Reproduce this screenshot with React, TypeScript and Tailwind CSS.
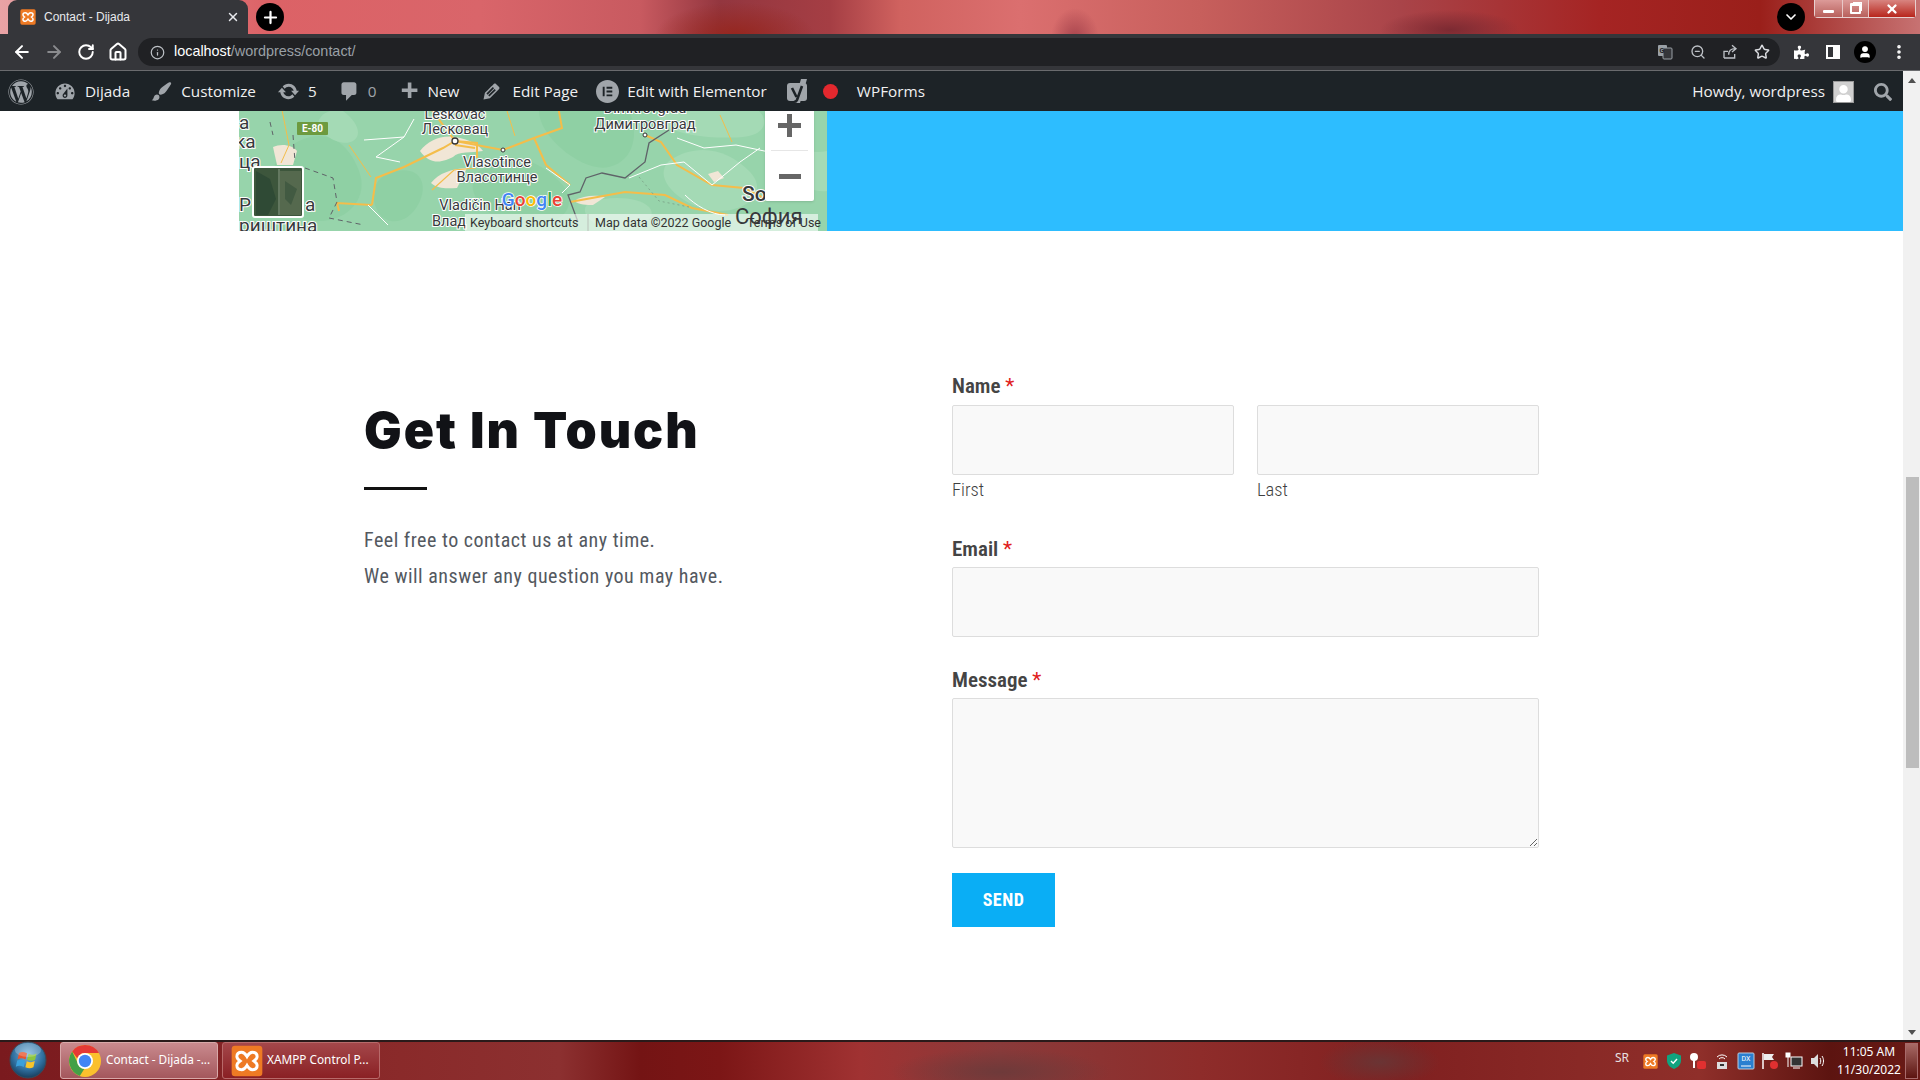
import {
  ArrowLeft,
  ArrowRight,
  ChevronDown,
  Home,
  Info,
  MoreVertical,
  Plus,
  RotateCw,
  Star,
  User,
  X,
  ZoomOut,
} from "lucide-react";
import { FaPuzzlePiece, FaSearch, FaUser, FaWordpress } from "react-icons/fa";
import { SiElementor } from "react-icons/si";

// admin bar icons (dashicons shapes)
const DASH = {
  gauge:
    "M3.76 16h12.48c1.1-1.37 1.76-3.11 1.76-5 0-4.42-3.58-8-8-8s-8 3.58-8 8c0 1.89.66 3.63 1.76 5zM10 4c.55 0 1 .45 1 1s-.45 1-1 1-1-.45-1-1 .45-1 1-1zM6 6c.55 0 1 .45 1 1s-.45 1-1 1-1-.45-1-1 .45-1 1-1zm8 0c.55 0 1 .45 1 1s-.45 1-1 1-1-.45-1-1 .45-1 1-1zm-5.37 5.55L12 7v6c0 1.1-.9 2-2 2s-2-.9-2-2c0-.57.24-1.08.63-1.45zM4 10c.55 0 1 .45 1 1s-.45 1-1 1-1-.45-1-1 .45-1 1-1zm12 0c.55 0 1 .45 1 1s-.45 1-1 1-1-.45-1-1 .45-1 1-1zm-5 3c0-.55-.45-1-1-1s-1 .45-1 1 .45 1 1 1 1-.45 1-1z",
  brush:
    "M18.33 3.57s.27-.8-.31-1.36c-.53-.52-1.22-.24-1.22-.24-.61.3-5.76 3.47-7.67 5.57-.86.96-2.06 3.79-1.09 4.82.92.98 3.96-.17 4.79-1 2.06-2.06 5.21-7.17 5.5-7.79zM1.4 17.65c2.37-1.56 1.46-3.41 3.23-4.64.93-.65 2.22-.62 3.08.29.63.67.8 2.57-.16 3.46-1.57 1.45-4 1.55-6.15.89z",
  update:
    "M10.2 3.28c3.53 0 6.43 2.61 6.92 6h2.08l-3.5 4-3.5-4h2.32c-.45-1.97-2.21-3.45-4.32-3.45-1.45 0-2.73.71-3.54 1.78L4.95 5.66C6.23 4.2 8.11 3.28 10.2 3.28zm-.4 13.44c-3.52 0-6.43-2.61-6.92-6H.8l3.5-4c1.17 1.33 2.33 2.67 3.5 4H5.48c.45 1.97 2.21 3.45 4.32 3.45 1.45 0 2.73-.71 3.54-1.78l1.71 1.95c-1.28 1.46-3.15 2.38-5.25 2.38z",
  comment: "M5 2h9c1.1 0 2 .9 2 2v7c0 1.1-.9 2-2 2h-2l-5 5v-5H5c-1.1 0-2-.9-2-2V4c0-1.1.9-2 2-2z",
  plus: "M17 7v3h-5v5H9v-5H4V7h5V2h3v5h5z",
  edit:
    "M13.89 3.39l2.71 2.72c.46.46.42 1.24.03 1.64l-8.01 8.02-5.56 1.16 1.16-5.58s7.6-7.63 7.99-8.03c.39-.39 1.22-.39 1.68.07zm-2.73 2.79l-5.59 5.61 1.11 1.11 5.54-5.65zm-2.97 8.23l5.58-5.6-1.07-1.08-5.59 5.6z",
};

function DashIcon({ d, size }: { d: string; size: number }) {
  return (
    <svg width={size} height={size} viewBox="0 0 20 20" fill="#a0a5aa" fillRule="evenodd">
      <path d={d} />
    </svg>
  );
}

function YoastIcon() {
  return (
    <svg width="22" height="26" viewBox="0 0 22 26">
      <rect x="0" y="4" width="20" height="18" rx="3" fill="#a0a5aa" />
      <path d="M14 0h6l-7 24H7z" fill="#a0a5aa" />
      <path d="M5 9l4.500 9M15 7l-5 14c-.5 1.300-1.500 1.800-3 2" fill="none" stroke="#1d2327" strokeWidth="2.600" />
    </svg>
  );
}

function XamppIcon({ size, className }: { size: number; className?: string }) {
  return (
    <svg width={size} height={size} viewBox="0 0 24 24" className={className}>
      <rect x="0.5" y="0.5" width="23" height="23" rx="2.5" fill="#ee7a24" />
      <path
        d="M8 5.5c-2.6 0-3.6 1.6-3.6 3.1 0 1.4 1 2.4 2.4 3.4-1.4 1-2.4 2-2.4 3.4 0 1.5 1 3.1 3.6 3.1 2 0 3-1.5 4-3.2 1 1.7 2 3.2 4 3.2 2.6 0 3.6-1.6 3.6-3.1 0-1.4-1-2.4-2.4-3.4 1.4-1 2.4-2 2.4-3.4 0-1.5-1-3.1-3.6-3.1-2 0-3 1.5-4 3.2-1-1.7-2-3.2-4-3.2z"
        fill="none"
        stroke="#fff"
        strokeWidth="2.2"
      />
    </svg>
  );
}

function ChromeIcon() {
  return (
    <svg width="32" height="32" viewBox="0 0 32 32">
      <circle cx="16" cy="16" r="16" fill="#fbc02d" />
      <path d="M16 0a16 16 0 0 1 13.9 8H16a8 8 0 0 0-7.6 5.5L3.2 6.4A16 16 0 0 1 16 0z" fill="#e53935" />
      <path d="M3.2 6.4l6.4 13.6a8 8 0 0 0 5.6 4L10.8 31A16 16 0 0 1 3.2 6.4z" fill="#43a047" />
      <circle cx="16" cy="16" r="8" fill="#fff" />
      <circle cx="16" cy="16" r="6.2" fill="#4285f4" />
    </svg>
  );
}

function StartOrb() {
  return (
    <svg width="38" height="38" viewBox="0 0 38 38">
      <defs>
        <radialGradient id="orb" cx="50%" cy="35%" r="70%">
          <stop offset="0%" stopColor="#7fb7df" />
          <stop offset="60%" stopColor="#2f6f9f" />
          <stop offset="100%" stopColor="#12334f" />
        </radialGradient>
      </defs>
      <circle cx="19" cy="19" r="18" fill="url(#orb)" stroke="#3a4a5a" />
      <path d="M10 12c3-1.500 5-1 8 .2l-1.400 6.200c-3-1.200-5-1.500-8-.2z" fill="#e8552d" />
      <path d="M19.500 12.800c3 1.200 5 1.400 8-.2l-1.400 6.200c-3 1.400-5 1.200-8 0z" fill="#8cc63f" />
      <path d="M8.200 19.500c3-1.300 5-1 8 .2l-1.400 6.200c-3-1.200-5-1.500-8-.2z" fill="#3aa0dc" />
      <path d="M17.800 20.200c3 1.200 5 1.400 8-.2l-1.400 6.200c-3 1.400-5 1.200-8 0z" fill="#f7c52b" />
      <ellipse cx="19" cy="9" rx="13" ry="7" fill="#fff" opacity="0.22" />
    </svg>
  );
}

function MapCanvas() {
  return (
    <svg width="588" height="120" viewBox="0 0 588 120" className="block">
      <rect width="588" height="120" fill="#97d4ab" />
      {/* terrain patches */}
      <g fill="#8fd0a4">
        <path d="M60 30c30-14 50 4 60 30s-10 50-40 50-40-20-44-40 4-30 24-40z" />
        <path d="M240 60c30-24 60-10 80 10s10 44-30 44-70-34-50-54z" />
        <path d="M300 0h90c10 20 6 50-20 56s-70-30-70-56z" />
        <path d="M150 62c30-10 40 10 30 30s-30 24-40 10-6-34 10-40z" />
      </g>
      <g fill="#a4dab5">
        <path d="M430 50c30-20 60-10 80 10s0 40-30 40-70-30-50-50z" />
        <path d="M420 0h100c10 10 6 24-16 26s-90 0-84-26z" />
        <path d="M104 0c14 10 20 24 10 30s-30-4-34-14 10-20 24-16z" />
        <path d="M350 92c20-8 50-6 60 4s-10 24-30 24-44-18-30-28z" />
        <path d="M540 40c14-6 30 4 48 0v40c-20 4-56-26-48-40z" />
      </g>
      {/* towns */}
      <g fill="#f1e6d6">
        <path d="M181 40c8-10 20-16 35-14 14 2 24 8 28 14-12 2-24 0-30 6-8 4-22 10-33-6z" />
        <path d="M34 36c8-4 20-2 24 4l-4 14H38z" />
        <path d="M192 72c8-10 20-14 36-15l-10 20c-8 0-18 2-26-5z" />
        <path d="M335 90c10-6 22-6 31-4l-12 8c-6 0-14 0-19-4z" />
        <path d="M469 63l10-3 6 7-10 4z" />
      </g>
      {/* main roads */}
      <g fill="none" stroke="#f4bd4a" strokeWidth="2">
        <path d="M133 94l4-27 28-11 39-19 12-7" />
        <path d="M133 94l-35-2 2 8" />
        <path d="M216 30l48 9 31-12 28-10-4-22" />
        <path d="M189-6l27 36" />
        <path d="M216 30l22 2 0 15M216 34l20 3" />
        <path d="M295 27l12 27 24 20" />
        <path d="M406 24l16 7 16 23 35 20 32 3 20 10" />
        <path d="M481 4l12 27" strokeWidth="1" />
        <path d="M331 91l55-10 40 3 27 13 36 7" />
        <path d="M42-6l8 40-8 18" strokeWidth="1" />
        <path d="M193 79l22-20 22-2" strokeWidth="1.200" />
        <path d="M268 0l8 25" strokeWidth="1" />
        <path d="M110 34l22 32" strokeWidth="1" />
      </g>
      {/* minor roads */}
      <g fill="none" stroke="#ffffff" strokeWidth="1">
        <path d="M438 27l27 10 32-3 47 10" />
        <path d="M390 67l32-13 23-3 28 23 28-23 20-14" />
        <path d="M125 29l40-3-28 20 24 5" />
        <path d="M307 57l24 17-8 8" />
        <path d="M129 94l20 20" />
        <path d="M165 26l10-18" />
        <path d="M446 84c10 10 26 20 40 20" />
      </g>
      {/* borders */}
      <path d="M430 19l-20 13-4 19-20 16-23-5-16 5-6 14-12 3 10 27" fill="none" stroke="#5f6368" strokeWidth="1.300" />
      <path
        d="M31 11l3 13M54 24l2 27M66 57l28 10 4 24-8 16 35 7"
        fill="none"
        stroke="#5f6368"
        strokeWidth="1"
        strokeDasharray="5 4"
      />
      <path d="M400 66l20 24 30 6M530 60l30 30" fill="none" stroke="#7fa98c" strokeWidth="1" strokeDasharray="2 3" />
      <rect x="58" y="11" width="31" height="13" fill="#6d9a3f" rx="1" />
      <text x="73.500" y="21" fontSize="10" fontWeight="700" fill="#fff" textAnchor="middle" fontFamily="Roboto">E-80</text>
      <circle cx="216" cy="30" r="3" fill="#fff" stroke="#333" strokeWidth="1.300" />
      <circle cx="264" cy="39" r="2" fill="#fff" stroke="#333" />
      <circle cx="406" cy="24" r="2" fill="#fff" stroke="#333" />
      {/* place names */}
      <g fontFamily="Roboto" fontSize="14.500" fill="#37393c" textAnchor="middle" stroke="#ffffff" strokeWidth="2" paintOrder="stroke">
        <text x="216" y="8">Leskovac</text>
        <text x="216" y="23">Лесковац</text>
        <text x="258" y="56">Vlasotince</text>
        <text x="258" y="71">Власотинце</text>
        <text x="241" y="99">Vladičin Han</text>
        <text x="406" y="2">Dimitrovgrad</text>
        <text x="406" y="18">Димитровград</text>
        <text x="193" y="115" textAnchor="start">Влад</text>
        <g fontSize="19" textAnchor="start">
          <text x="0" y="18">а</text>
          <text x="-4" y="37">ка</text>
          <text x="0" y="57">ца</text>
          <text x="0" y="100">Р</text>
          <text x="66" y="100">а</text>
          <text x="0" y="121">риштина</text>
          <text x="503" y="90" fontSize="21" fontWeight="500">So</text>
        </g>
      </g>
      {/* layer thumbnail */}
      <rect x="14" y="56" width="50" height="50" rx="2" fill="#3d563c" stroke="#fff" strokeWidth="2" />
      <path d="M17 60l14 8 6 20-8 16H17z" fill="#2f4a35" />
      <path d="M40 58v46" stroke="#8a9a84" />
      <path d="M41 60h21v44H41z" fill="#55694e" />
      <path d="M46 70l12 8-6 16-6-6z" fill="#425a42" />
      <text x="293" y="95" fontSize="19" fontWeight="500" fontFamily="Roboto" textAnchor="middle" stroke="#ffffff" strokeWidth="1.500" paintOrder="stroke">
        <tspan fill="#4285f4">G</tspan>
        <tspan fill="#ea4335">o</tspan>
        <tspan fill="#fbbc05">o</tspan>
        <tspan fill="#4285f4">g</tspan>
        <tspan fill="#34a853">l</tspan>
        <tspan fill="#ea4335">e</tspan>
      </text>
      <rect x="226" y="103" width="353" height="17" fill="#ffffff" opacity="0.6" />
      <path d="M349 103v17" stroke="#b9c2b9" />
      <text x="496" y="113" fontSize="22" fontFamily="Roboto" fill="#37393c">София</text>
      <g fontFamily="Roboto" fontSize="12.500" fill="#333">
        <text x="231" y="116">Keyboard shortcuts</text>
        <text x="356" y="116">Map data ©2022 Google</text>
        <text x="508" y="116">Terms of Use</text>
      </g>
    </svg>
  );
}

function AdminItem({ icon, label, className }: { icon: React.ReactNode; label: string; className?: string }) {
  return (
    <div className={"flex items-center " + (className ?? "")}>
      {icon}
      <span className="text-[#f0f0f1]">{label}</span>
    </div>
  );
}

function FieldLabel({ children }: { children: string }) {
  return (
    <div className="h-[26px] text-[21px] leading-[26px] font-semibold text-[#444] font-['Roboto'] [font-stretch:75%]">
      {children} <span className="text-[#e02020] font-normal">*</span>
    </div>
  );
}

const inputClass = "block w-full h-[70px] rounded-[2px] border border-[#dddddd] bg-[#f9f9f9]";
const subLabelClass = "mt-[3px] h-[24px] text-[18.5px] leading-[24px] font-light text-[#3f3f3f] font-['Roboto'] [font-stretch:75%]";

export default function App() {
  return (
    <div className="w-[1920px] h-[1080px] overflow-hidden flex flex-col bg-white font-['Open_Sans',sans-serif]">
      {/* chrome tab strip, wallpaper behind it */}
      <div className="h-[34px] shrink-0 flex items-start pl-[8px] bg-[radial-gradient(ellipse_80px_34px_at_735px_36px,#96261e,transparent),radial-gradient(ellipse_24px_30px_at_1075px_38px,#a8454e,transparent),radial-gradient(ellipse_70px_20px_at_1450px_30px,#7c2a32,transparent),linear-gradient(90deg,#e9a3a5_0px,#dc6266_270px,#d9656a_480px,#c85a60_640px,#93363f_720px,#a53e44_830px,#d0625f_900px,#db6f6f_1020px,#c75f5c_1200px,#a94449_1400px,#a52423_1600px,#9a1f1a_1760px,#c77272_1920px)]">
        <div className="w-[240px] h-[34px] rounded-t-[9px] bg-[#35363a] flex items-center pl-[12px] pr-[8px]">
          <XamppIcon size={16} />
          <span className="ml-[8px] flex-1 text-[12px] text-[#e8eaed] font-['Liberation_Sans',sans-serif]">Contact - Dijada</span>
          <X size={14} strokeWidth={2.500} className="text-[#e8eaed]" />
        </div>
        <div className="ml-[8px] mt-[3px] w-[28px] h-[28px] rounded-full bg-black flex items-center justify-center">
          <Plus size={19} strokeWidth={2.800} className="text-white" />
        </div>
        <div className="flex-1" />
        <div className="mt-[3px] mr-[9px] w-[28px] h-[28px] rounded-full bg-black flex items-center justify-center">
          <ChevronDown size={16} strokeWidth={2.500} className="text-white" />
        </div>
        <div className="w-[102px] h-[18px] mr-[4px] rounded-b-[4px] border border-t-0 border-[#e8d0d0] flex bg-[#c86a68]">
          <div className="w-[28px] flex items-center justify-center border-r border-[#e8c8c8] bg-[linear-gradient(#dc9a98,#b8605c)]">
            <div className="w-[11px] h-[3px] mt-[5px] bg-white rounded-[1px]" />
          </div>
          <div className="w-[26px] flex items-center justify-center border-r border-[#e8c8c8] bg-[linear-gradient(#dc9a98,#b8605c)]">
            <div className="w-[11px] h-[11px] border-2 border-t-[3px] border-white rounded-[1px] shadow-[2px_-2px_0_-1px_#fff]" />
          </div>
          <div className="flex-1 flex items-center justify-center bg-[linear-gradient(#d88480,#b8261c)]">
            <X size={14} strokeWidth={4} className="text-white" />
          </div>
        </div>
      </div>

      {/* chrome toolbar */}
      <div className="h-[37px] shrink-0 bg-[#35363a] border-b border-[#6a6b6e] flex items-center pl-[12px] pr-[10px]">
        <ArrowLeft size={20} strokeWidth={2.400} className="text-white" />
        <ArrowRight size={20} strokeWidth={2.400} className="ml-[12px] text-[#8a8b8e]" />
        <RotateCw size={18} strokeWidth={2.600} className="ml-[13px] text-white" />
        <Home size={20} strokeWidth={2.400} className="ml-[13px] text-white" />
        <div className="ml-[10px] w-[1642px] h-[28px] rounded-full bg-[#202124] flex items-center pl-[12px] pr-[10px]">
          <Info size={15} className="text-[#bdc1c6]" />
          <span className="ml-[9px] text-[14.4px] text-white font-['Liberation_Sans',sans-serif]">
            localhost<span className="text-[#9aa0a6]">/wordpress/contact/</span>
          </span>
          <div className="flex-1" />
          <svg width="16" height="16" viewBox="0 0 16 16">
            <rect x="1" y="1" width="9" height="11" rx="1" fill="#9aa0a6" />
            <rect x="6" y="4" width="9" height="11" rx="1" fill="#35363a" stroke="#9aa0a6" />
            <text x="2.500" y="9" fontSize="7" fontWeight="700" fill="#202124" fontFamily="Roboto">G</text>
          </svg>
          <ZoomOut size={16} className="ml-[17px] text-[#bdc1c6]" />
          <svg width="16" height="16" viewBox="0 0 24 24" fill="none" stroke="#bdc1c6" strokeWidth="2" className="ml-[16px]">
            <path d="M3 21V11h6M3 21h16v-6M10 16c0-6 4-9 10-9M15 2l6 5-6 5" />
          </svg>
          <Star size={16} strokeWidth={2.200} className="ml-[16px] text-[#dadce0]" />
        </div>
        <FaPuzzlePiece size={15} className="ml-[14px] text-white" />
        <div className="ml-[17px] w-[14px] h-[14px] border-2 border-white flex justify-end">
          <div className="w-[5px] h-full bg-white" />
        </div>
        <div className="ml-[14px] w-[22px] h-[22px] rounded-full bg-black flex items-center justify-center">
          <User size={14} fill="#fff" className="text-white" />
        </div>
        <MoreVertical size={18} strokeWidth={2.800} className="ml-[14px] text-white" />
      </div>

      {/* page column + scrollbar */}
      <div className="h-[969px] shrink-0 flex">
        <div className="flex-1 flex flex-col min-w-0">
          {/* wordpress admin bar */}
          <div className="h-[40px] shrink-0 bg-[#1d2327] flex items-center pt-[1px] pl-[8px] pr-[11px] text-[15.3px]">
            <FaWordpress size={26} className="text-[#a0a5aa]" />
            <AdminItem className="ml-[19px] gap-[8px]" icon={<DashIcon d={DASH.gauge} size={24} />} label="Dijada" />
            <AdminItem className="ml-[20px] gap-[8px]" icon={<DashIcon d={DASH.brush} size={23} />} label="Customize" />
            <AdminItem className="ml-[21px] gap-[8px]" icon={<DashIcon d={DASH.update} size={23} />} label="5" />
            <div className="ml-[21px] flex items-center">
              <DashIcon d={DASH.comment} size={23} />
              <span className="ml-[7px] text-[#a0a5aa]">0</span>
            </div>
            <AdminItem className="ml-[21px] gap-[6px]" icon={<DashIcon d={DASH.plus} size={24} />} label="New" />
            <AdminItem className="ml-[21px] gap-[9px]" icon={<DashIcon d={DASH.edit} size={23} />} label="Edit Page" />
            <AdminItem className="ml-[18px] gap-[8px]" icon={<SiElementor size={23} className="text-[#a0a5aa]" />} label="Edit with Elementor" />
            <div className="ml-[20px]">
              <YoastIcon />
            </div>
            <div className="ml-[14px] w-[15px] h-[15px] rounded-full bg-[#e3282e]" />
            <span className="ml-[19px] text-[#f0f0f1]">WPForms</span>
            <div className="flex-1" />
            <span className="text-[#f0f0f1]">Howdy, wordpress</span>
            <div className="ml-[8px] w-[21px] h-[22px] bg-[#d0d0d0] border border-[#9a9a9a] flex items-end justify-center overflow-hidden">
              <FaUser size={17} className="text-white" />
            </div>
            <FaSearch size={18} className="ml-[20px] text-[#a0a5aa]" />
          </div>

          <div className="h-[120px] shrink-0 flex pl-[239px]">
            <div className="relative w-[588px] h-[120px] overflow-hidden">
              <MapCanvas />
              <div className="absolute left-[526px] top-0 w-[49px] h-[90px] bg-white rounded-b-[2px] flex flex-col items-center shadow-sm">
                <div className="h-[39px] pb-[11px] flex items-center justify-center text-[#666]">
                  <svg width="23" height="23" viewBox="0 0 23 23" fill="#666">
                    <path d="M9 0h5v9h9v5h-9v9H9v-9H0V9h9z" />
                  </svg>
                </div>
                <div className="w-[37px] h-px bg-[#e6e6e6]" />
                <div className="mt-[23px] w-[22px] h-[5px] bg-[#666]" />
              </div>
            </div>
            <div className="flex-1 bg-[#2dbdff]" />
          </div>

          <div className="flex pl-[364px]">
            <div className="w-[588px] pt-[164px]">
              <h1 className="h-[70px] text-[50px] leading-[70px] font-black tracking-[2px] text-[#111216] font-['Inter',sans-serif]">
                Get In Touch
              </h1>
              <div className="mt-[22px] w-[63px] h-[3px] bg-[#111]" />
              <div className="mt-[32px] text-[20px] leading-[36px] tracking-[0.5px] text-[#54595f] font-['Roboto',sans-serif] [font-stretch:75%]">
                <p>Feel free to contact us at any time.</p>
                <p>We will answer any question you may have.</p>
              </div>
            </div>
            <div className="w-[587px] pt-[142px]">
              <FieldLabel>Name</FieldLabel>
              <div className="mt-[6px] flex gap-[23px]">
                <div className="flex-1">
                  <div className={inputClass} />
                  <div className={subLabelClass}>First</div>
                </div>
                <div className="flex-1">
                  <div className={inputClass} />
                  <div className={subLabelClass}>Last</div>
                </div>
              </div>
              <div className="mt-[34px]">
                <FieldLabel>Email</FieldLabel>
              </div>
              <div className={"mt-[5px] " + inputClass} />
              <div className="mt-[30px]">
                <FieldLabel>Message</FieldLabel>
              </div>
              <textarea className="mt-[5px] block w-full h-[150px] rounded-[2px] border border-[#dddddd] bg-[#f9f9f9]" />
              <button className="mt-[25px] w-[103px] h-[54px] pb-[2px] bg-[#0aaef5] text-white text-[18px] font-bold tracking-[0.5px] font-['Roboto'] [font-stretch:75%]">
                SEND
              </button>
            </div>
          </div>
        </div>
        <div className="w-[17px] shrink-0 bg-[#f1f1f1] flex flex-col items-center">
          <div className="mt-[7px] w-0 h-0 border-x-[4px] border-x-transparent border-b-[5px] border-b-[#505050]" />
          <div className="mt-[394px] ml-[2px] w-[13px] h-[291px] bg-[#bdbdbd]" />
          <div className="flex-1" />
          <div className="mb-[5px] w-0 h-0 border-x-[4px] border-x-transparent border-t-[5px] border-t-[#505050]" />
        </div>
      </div>

      {/* windows taskbar */}
      <div className="h-[40px] shrink-0 flex items-center border-t-2 border-t-[#2a1a1a] bg-[radial-gradient(ellipse_60px_24px_at_1380px_20px,#6a3434,transparent),radial-gradient(ellipse_110px_24px_at_1000px_30px,#6e3a3a,transparent),linear-gradient(90deg,#7a1a1e_0px,#8a2a2a_400px,#8c3030_560px,#741414_640px,#7c1616_720px,#a03232_860px,#8a3a3a_1000px,#8e2c2a_1200px,#802020_1400px,#8f2f2a_1700px,#5c1410_1830px,#6a1a16_1920px)]">
        <div className="ml-[9px] mb-[2px]">
          <StartOrb />
        </div>
        <div className="ml-[13px] mb-[1px] w-[158px] h-[37px] rounded-[3px] border border-[#d8a8a8] bg-[linear-gradient(#c98a8e,#a4575c)] flex items-center pl-[8px]">
          <ChromeIcon />
          <span className="ml-[5px] mb-[2px] text-[11.8px] text-white font-['Noto_Sans',sans-serif] whitespace-nowrap">Contact - Dijada -...</span>
        </div>
        <div className="ml-[4px] mb-[1px] w-[158px] h-[37px] rounded-[3px] border border-[#b86a6a] bg-[linear-gradient(#a4474a,#8a2024)] flex items-center pl-[8px]">
          <XamppIcon size={32} />
          <span className="ml-[4px] mb-[2px] text-[11.8px] text-white font-['Noto_Sans',sans-serif] whitespace-nowrap">XAMPP Control P...</span>
        </div>
        <div className="flex-1" />
        <span className="mb-[7px] text-[12px] text-[#e8e0e0] font-['Noto_Sans',sans-serif]">SR</span>
        <div className="ml-[9px] flex items-center">
          <div className="w-[24px] flex justify-center">
            <XamppIcon size={15} />
          </div>
          <div className="w-[24px] flex justify-center">
            <svg width="14" height="16" viewBox="0 0 14 16">
              <path d="M7 0l7 2.500v5c0 4-3 7-7 8.500-4-1.500-7-4.500-7-8.500v-5z" fill="#10a37f" />
              <path d="M4 8l2.200 2.200L10 6" stroke="#fff" strokeWidth="1.400" fill="none" />
            </svg>
          </div>
          <div className="w-[24px] flex justify-center">
            <svg width="18" height="18" viewBox="0 0 18 18">
              <circle cx="5" cy="5" r="4" fill="#fff" />
              <rect x="4" y="8" width="2" height="8" fill="#fff" />
              <rect x="8" y="9" width="9" height="8" rx="2" fill="#e03030" />
            </svg>
          </div>
          <div className="w-[24px] flex justify-center">
            <svg width="14" height="18" viewBox="0 0 14 18">
              <path d="M2 5a7 7 0 0 1 10 0M4 7a4 4 0 0 1 6 0" stroke="#fff" fill="none" />
              <rect x="2" y="10" width="10" height="7" fill="#ddd" />
              <rect x="5" y="12" width="4" height="2" fill="#333" />
            </svg>
          </div>
          <div className="w-[24px] flex justify-center">
            <svg width="18" height="18" viewBox="0 0 18 18">
              <rect x="1" y="1" width="16" height="16" rx="1" fill="#2a7fd0" stroke="#bcd" />
              <text x="9" y="9" fontSize="7" fill="#fff" textAnchor="middle" fontFamily="Roboto">DX</text>
              <path d="M4 14h10" stroke="#fff" />
            </svg>
          </div>
          <div className="w-[24px] flex justify-center">
            <svg width="18" height="18" viewBox="0 0 18 18">
              <path d="M2 1v16" stroke="#fff" strokeWidth="1.500" />
              <path d="M3 2h10l-2 3 2 3H3z" fill="#eee" />
              <circle cx="13" cy="13" r="4" fill="#e03030" />
            </svg>
          </div>
          <div className="w-[24px] flex justify-center">
            <svg width="18" height="18" viewBox="0 0 18 18" fill="none" stroke="#fff">
              <rect x="6" y="5" width="11" height="9" fill="#333" />
              <rect x="1" y="1" width="4" height="4" fill="#fff" />
              <path d="M3 5v10M8 16h7" />
            </svg>
          </div>
          <div className="w-[24px] flex justify-center">
            <svg width="16" height="16" viewBox="0 0 16 16" fill="none" stroke="#fff">
              <path d="M1 5h3l4-4v14l-4-4H1z" fill="#ddd" stroke="none" />
              <path d="M10 5c1 2 1 4 0 6M12 3c2 3 2 7 0 10" />
            </svg>
          </div>
        </div>
        <div className="ml-[3px] w-[72px] text-center text-[12px] leading-[18px] text-white font-['Noto_Sans',sans-serif]">
          <div>11:05 AM</div>
          <div>11/30/2022</div>
        </div>
        <div className="mr-[2px] w-[13px] h-[36px] border border-[#a86a6a] bg-[linear-gradient(#a86a66,#5c1410)]" />
      </div>
    </div>
  );
}
